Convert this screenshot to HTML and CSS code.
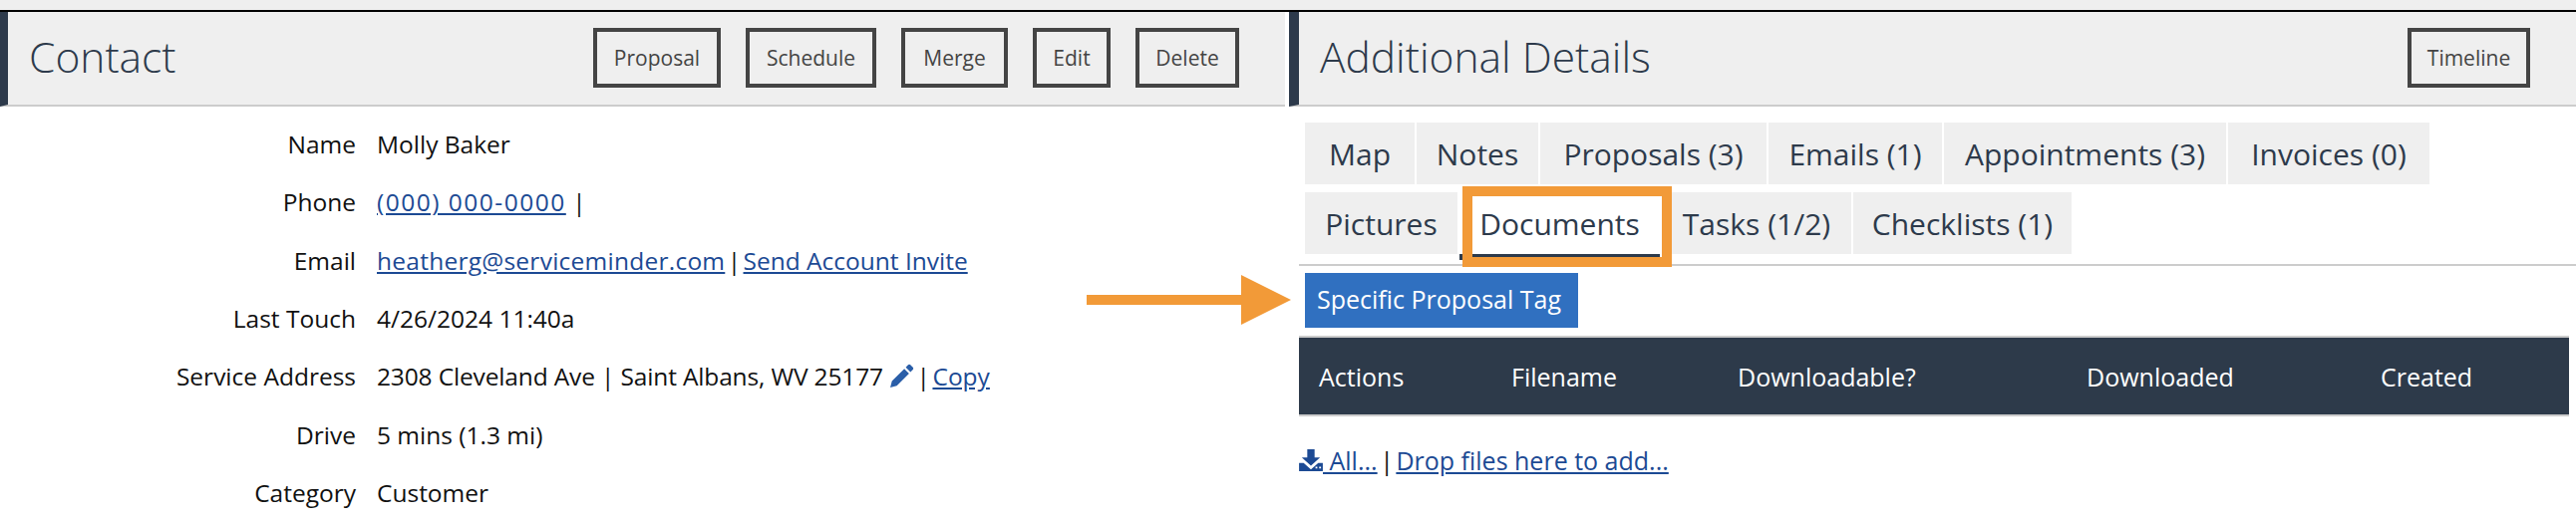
FILE: index.html
```html
<!DOCTYPE html>
<html lang="en">
<head>
  <meta charset="UTF-8" />
  <title>Contact</title>
  <link rel="stylesheet" href="styles.css">
</head>
<body>
  <div class="top-strip"></div>

  <div class="panels">
    <!-- contact -->
    <section class="panel panel-left">
      <div class="panel-head">
        <h2>Contact</h2>
        <div class="head-btns">
          <a class="btn btn-proposal">Proposal</a>
          <a class="btn btn-schedule">Schedule</a>
          <a class="btn btn-merge">Merge</a>
          <a class="btn btn-edit">Edit</a>
          <a class="btn btn-delete">Delete</a>
        </div>
      </div>
      <div class="rows">
        <div class="row"><span class="label">Name</span><span>Molly Baker</span></div>
        <div class="row"><span class="label">Phone</span><span><a class="phone" href="#">(000) 000-0000</a> |</span></div>
        <div class="row"><span class="label">Email</span><span><a class="email" href="#">heatherg@serviceminder.com</a> <span class="sep">|</span> <a href="#">Send Account Invite</a></span></div>
        <div class="row"><span class="label">Last Touch</span><span>4/26/2024 11:40a</span></div>
        <div class="row">
          <span class="label">Service Address</span>
          <span><span class="addr">2308 Cleveland Ave | Saint Albans, WV 25177</span>
            <svg class="icon-pencil" viewBox="0 0 24 24"><path d="M18.2 1.2a1.6 1.6 0 0 1 2.2 0l2.4 2.4a1.6 1.6 0 0 1 0 2.2l-2.3 2.3-4.6-4.6zM14.5 5l4.6 4.6L7.3 21.4 1 23l1.6-6.3z"/></svg>
            <span class="sep">|</span> <a href="#">Copy</a></span>
        </div>
        <div class="row"><span class="label">Drive</span><span>5 mins (1.3 mi)</span></div>
        <div class="row"><span class="label">Category</span><span>Customer</span></div>
      </div>
    </section>

    <!-- details -->
    <section class="panel panel-right">
      <div class="panel-head">
        <h2>Additional Details</h2>
        <div class="head-btns">
          <a class="btn btn-timeline">Timeline</a>
        </div>
      </div>
      <div class="panel-body">
        <div class="tabs">
          <div class="tab-row">
            <a class="tab tab-map">Map</a>
            <a class="tab tab-notes">Notes</a>
            <a class="tab tab-proposals">Proposals (3)</a>
            <a class="tab tab-emails">Emails (1)</a>
            <a class="tab tab-appts">Appointments (3)</a>
            <a class="tab tab-invoices">Invoices (0)</a>
          </div>
          <div class="tab-row">
            <a class="tab tab-pictures">Pictures</a>
            <a class="tab tab-docs active">Documents</a>
            <a class="tab tab-tasks">Tasks (1/2)</a>
            <a class="tab tab-checklists">Checklists (1)</a>
          </div>
        </div>

        <div class="tag-row"><a class="tag">Specific Proposal Tag</a></div>

        <table class="docs">
          <thead>
            <tr>
              <th class="col-actions">Actions</th>
              <th class="col-file">Filename</th>
              <th class="col-dl">Downloadable?</th>
              <th class="col-dled">Downloaded</th>
              <th>Created</th>
            </tr>
          </thead>
        </table>

        <div class="file-links">
          <a href="#"><svg class="icon-download" viewBox="0 0 26 24"><path d="M9 0h8v9h6L13 18 3 9h6z"/><path d="M0 15h5l8 7 8-7h5v9H0z"/><path class="tray-dots" d="M18 19h2v2h-2zM22 19h2v2h-2z"/></svg> All...</a> <span class="sep">|</span> <a href="#">Drop files here to add...</a>
        </div>
      </div>
    </section>
  </div>

  <!-- arrow annotation -->
  <svg class="arrow" viewBox="0 0 205 50"><path d="M0 20h155V0l50 25-50 25V30H0z"/></svg>
</body>
</html>
```

FILE: styles.css
```css
html, body {
  height: 100%;
}

body {
  margin: 0;
  overflow: hidden;
  position: relative;
  background: #fff;
  color: #111;
  font-family: "Open Sans", Lato, sans-serif;
  font-size: 24.5px;
}

a {
  color: #1c4a94;
}

.top-strip {
  height: 10px;
  background: #efefef;
  border-bottom: 2px solid #000;
}

.panels {
  display: flex;
  gap: 4px;
}

.panel-left { width: 1289px; }
.panel-right { flex: 1; }

.panel-head {
  display: flex;
  align-items: center;
  justify-content: space-between;
  box-sizing: border-box;
  height: 95px;
  padding: 0 46px 2px 21px;
  background: #efefef;
  border-left: 8px solid #2d3a4b;
  border-bottom: 2px solid #ccc;
}

.panel-right .panel-head {
  border-left-width: 10px;
  padding-left: 21px;
}

.panel-head h2 {
  margin: -3px 0 0;
  font-size: 42.5px;
  font-weight: 300;
  color: #2d3a4b;
}

.head-btns {
  display: flex;
  gap: 25px;
}

.btn {
  display: flex;
  align-items: center;
  justify-content: center;
  box-sizing: border-box;
  height: 60px;
  border: 4px solid #444;
  font-size: 21px;
  color: #444;
}

.btn-proposal { width: 128px; }
.btn-schedule { width: 131px; }
.btn-merge { width: 107px; }
.btn-edit { width: 78px; }
.btn-delete { width: 104px; }
.btn-timeline { width: 123px; }

.rows {
  padding-top: 9px;
}

.row {
  display: flex;
  gap: 21px;
  height: 58.33px;
  line-height: 58px;
}

.label {
  width: 357px;
  text-align: right;
}

.phone { letter-spacing: 1.5px; }
.email { letter-spacing: 0.25px; }
.addr { letter-spacing: -0.15px; }

.sep {
  margin: 0 -4px;
}

.icon-pencil {
  width: 25px;
  height: 25px;
  fill: #2a5ea8;
  vertical-align: -3px;
}

.panel-body {
  padding-left: 10px;
}

.tabs {
  display: flex;
  flex-direction: column;
  gap: 8px;
  padding: 16px 0 4px 6px;
  border-bottom: 2px solid #ccc;
}

.tab-row {
  display: flex;
  gap: 2px;
}

.tab {
  display: flex;
  align-items: center;
  justify-content: center;
  box-sizing: border-box;
  height: 62px;
  background: #efefef;
  font-size: 30px;
  color: #2d3a4b;
}

.tab-map { width: 110px; }
.tab-notes { width: 122px; }
.tab-proposals { width: 227px; }
.tab-emails { width: 174px; }
.tab-appts { width: 283px; }
.tab-invoices { width: 202px; }
.tab-pictures { width: 153px; }
.tab-docs { width: 201px; }
.tab-tasks { width: 190px; }
.tab-checklists { width: 219px; }

.tab.active {
  position: relative;
  height: 68px;
  background: #fff;
  border-bottom: 6px solid #2d3a4b;
}

/* orange highlight from the annotated screenshot */
.tab.active::after {
  content: "";
  position: absolute;
  top: -6px;
  right: -12px;
  bottom: -13px;
  left: 3px;
  border: 10px solid #f29a38;
}

.tag-row {
  padding: 7px 0 8px 6px;
}

.tag {
  display: inline-block;
  box-sizing: border-box;
  width: 274px;
  height: 55px;
  padding-left: 12px;
  line-height: 53px;
  background: #3070c0;
  color: #fff;
  font-size: 25px;
}

.docs {
  box-sizing: border-box;
  width: 1274px;
  border-collapse: collapse;
  table-layout: fixed;
  border-top: 2px solid #ccc;
  border-bottom: 2px solid #ccc;
}

.docs th {
  box-sizing: border-box;
  height: 79px;
  padding: 0 0 0 20px;
  background: #2d3a4a;
  color: #fff;
  font-size: 25px;
  font-weight: 400;
  text-align: left;
}

.col-actions { width: 193px; }
.col-file { width: 227px; }
.col-dl { width: 350px; }
.col-dled { width: 295px; }

.file-links {
  padding-top: 29px;
  line-height: 30px;
  font-size: 25px;
}

.icon-download {
  width: 24px;
  height: 22px;
  fill: #1c4a94;
  vertical-align: -1px;
}

.tray-dots { fill: #fff; }

.arrow {
  position: absolute;
  top: 276px;
  left: 1090px;
  width: 205px;
  height: 50px;
  fill: #f29a38;
}
```
